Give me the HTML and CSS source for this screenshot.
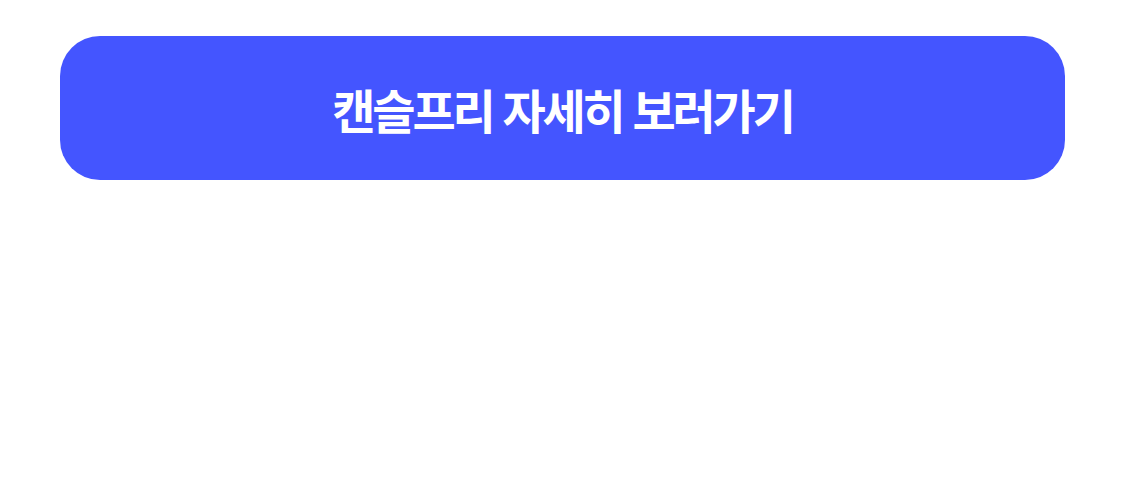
FILE: index.html
```html
<!DOCTYPE html>
<html lang="ko">
<head>
<meta charset="utf-8">
<link rel="stylesheet" href="styles.css">
<title>캔슬프리</title>
</head>
<body>
  <main class="page">
    <a class="cta" href="#">캔슬프리 자세히 보러가기</a>
  </main>
</body>
</html>
```
FILE: styles.css
```css
html, body {
  margin: 0;
  padding: 0;
  background: #ffffff;
}

.page {
  padding: 36px 60px 0 60px;
}

.cta {
  display: flex;
  align-items: center;
  justify-content: center;
  height: 144px;
  border-radius: 40px;
  background: #4455ff;
  color: #ffffff;
  text-decoration: none;
  font-family: "Noto Sans CJK KR", "Noto Sans", sans-serif;
  font-weight: 700;
  font-size: 47px;
  letter-spacing: -3.2px;
}
```
